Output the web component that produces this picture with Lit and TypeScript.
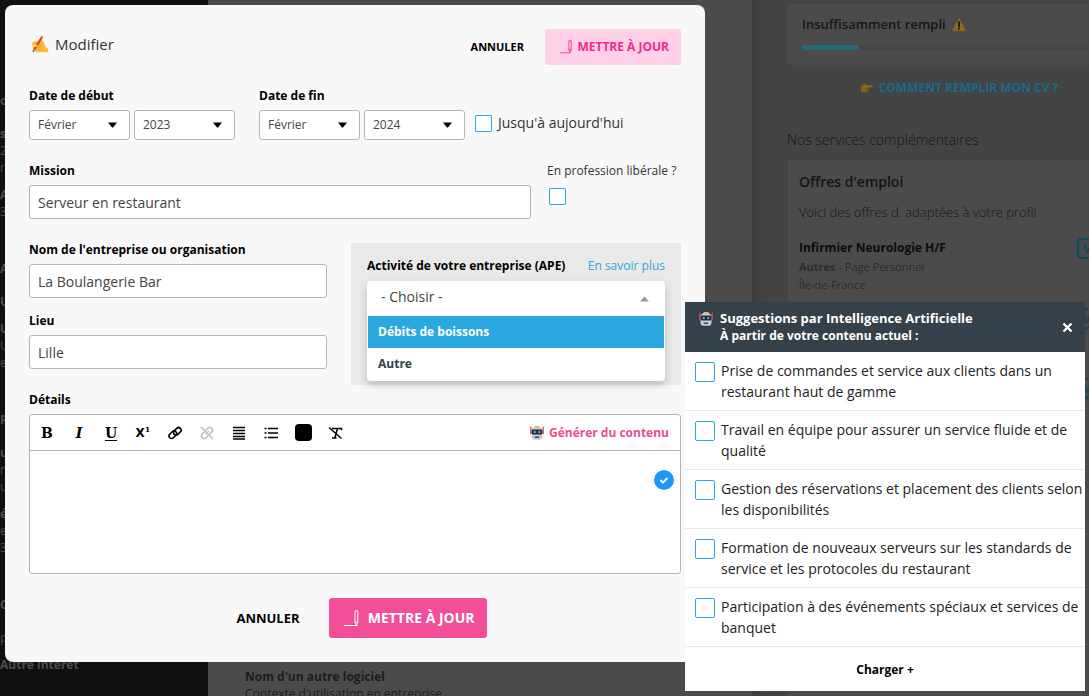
import { LitElement, html, css, svg, nothing } from "lit";
import { customElement, property, state } from "lit/decorators.js";

const writingHand = html`<svg class="emoji" width="18" height="18" viewBox="0 0 18 18" aria-hidden="true">
  <path d="M1 8.500C2 6.500 4 6 6 6.500L9.500 5.500C11 5 12.500 6 13 8L14.500 12L17.300 14V17.300H7C4.500 17.300 3 16 3.500 14.500L2 12Z" fill="#fdbb35"/>
  <path d="M7.500 10L11.500 8.800M7.200 12.500L11 11.800M7 15L11 14.500" stroke="#ee9b28" stroke-width="1"/>
  <path d="M3.200 14.600L10.800 2.400" stroke="#dd4530" stroke-width="2.300"/>
  <path d="M10.400 3L11.600 1.100" stroke="#f0705c" stroke-width="2.300"/>
  <path d="M1.800 17L3.400 14.400" stroke="#7a5238" stroke-width="1.300"/>
  <path d="M1.200 9.200L5.500 9.800C7 10 7 11.800 5.500 11.800L3 12Z" fill="#ffd15a"/>
</svg>`;

const robot = html`<svg class="emoji" width="14" height="14" viewBox="0 0 14 14" aria-hidden="true">
  <path d="M.8 .8v7.500M13.200 .8v7.500" stroke="#e2434f" stroke-width="1.300"/>
  <rect x="4.200" y="0" width="5.600" height="2.800" rx="1.200" fill="#f0b25a"/>
  <rect x="1.500" y="1.600" width="11" height="12.200" rx="3" fill="#c6cadd"/>
  <rect x="1.500" y="3.600" width="11" height="4.800" rx="1.400" fill="#222b3a"/>
  <circle cx="4.700" cy="6" r="1.300" fill="#4fa3d8"/>
  <circle cx="9.300" cy="6" r="1.300" fill="#4fa3d8"/>
  <rect x="4.600" y="10.600" width="4.800" height="1.500" rx=".7" fill="#3f4657"/>
</svg>`;

const warning = html`<svg class="emoji" width="14" height="13" viewBox="0 0 14 13" aria-hidden="true">
  <path d="M7 .8L13.300 12.300H.7Z" fill="#94671a" stroke="#94671a" stroke-linejoin="round"/>
  <path d="M7 4v4.600" stroke="#111" stroke-width="1.700" stroke-linecap="round"/><circle cx="7" cy="10.700" r=".9" fill="#111"/>
</svg>`;

const pointing = html`<svg class="emoji" width="13" height="12" viewBox="0 0 13 12" aria-hidden="true">
  <path d="M.6 5.500L4 1.500L6 3.300H11.600C12.800 3.300 12.800 5.200 11.600 5.200H8.200C9 6.600 8.900 8.300 8 9.300C7 10.800 4 11 1.200 9.800Z" fill="#886815"/>
  <path d="M5.600 6.700h2.600M5.600 8.400h2.200" stroke="#664b0c" stroke-width=".7"/>
</svg>`;

const pen = (w: number) => html`<svg width=${w} height=${w} viewBox="0 0 15 17" fill="none" stroke="currentColor" stroke-width="1" aria-hidden="true">
  <path d="M0 15.500h13.500M11 .8h2.800v11.400l-1.400 2.800L11 12.200zM11 12.200h2.800"/>
</svg>`;

const caret = (up = false) => html`<svg class="caret" width="9" height="6" viewBox="0 0 9 6" aria-hidden="true">
  <path d=${up ? "M0 5.500L4.500 .5L9 5.500Z" : "M0 .5h9L5 5.500H4Z"} fill="currentColor"/>
</svg>`;

const icon = (body: unknown) => html`<svg width="16" height="16" viewBox="0 0 16 16" fill="none" stroke="currentColor" stroke-width="1.500" aria-hidden="true">${body}</svg>`;

const link = svg`<g transform="rotate(-45 8 8)" stroke-width="1.700"><rect x="1" y="5.200" width="8.500" height="5" rx="2.500"/><rect x="6.500" y="6" width="8.500" height="5" rx="2.500"/></g>`;
const unlink = svg`<g stroke="#bcbcbc"><g transform="rotate(-45 8 8)"><path d="M7 5.300H4a2.700 2.700 0 0 0 0 5.400h3M9 5.300h3a2.700 2.700 0 0 1 0 5.400H9M6 8h1M9 8h1.500"/></g><path d="M2 2l12 12"/></g>`;
const justify = svg`<path d="M2 2.500h12M2 5.500h12M2 8.500h12M2 11.500h12M2 14h12" stroke-width="1.500"/>`;
const bullets = svg`<path d="M5 3.500h10M5 8h10M5 12.500h10M1.500 3.500h2M1.500 8h2M1.500 12.500h2" stroke-width="1.600"/>`;
const clear = svg`<path d="M5 3.500h9.500v1.700M10.500 3.500L7.800 13M5 13h4.500M2 2.500l12.500 11" stroke-width="1.500"/>`;

const base = css`
  :host, * { box-sizing: border-box; }
  button, input, select, textarea { font: inherit; color: inherit; margin: 0; }
  button { border: 0; background: none; padding: 0; cursor: pointer; }
  a { text-decoration: none; }
  svg { display: block; flex: none; }
  input[type="checkbox"] {
    appearance: none; flex: none; width: 17px; height: 17px;
    border: 1px solid #2fa8df; border-radius: 1px; background: #fff;
  }
`;

/* ------------------------------------------------------------ page behind */

const SIDE: [string, string][] = [
  ["o", "b"], ["s", "m b"], ["2", ""], ["r", ""], ["A", "s b"], ["3", ""],
  ["A", "l b"], ["U", "m b"], ["U", "s b"], ["U", ""], ["e", ""],
  ["R", "l b"], ["u", "m b"], ["n", ""], ["u", ""], ["é", "s b"], ["e", ""], ["3", ""],
  ["C", "l b"], ["p", "m"], ["Autre intérêt", "s b"],
];

@customElement("cv-page")
class CvPage extends LitElement {
  static styles = [base, css`
    :host { display: grid; grid-template-columns: 208px 1fr 337px; height: 100vh; overflow: hidden; font-size: 12px; line-height: 17px; background: #4b4b4b; }
    .side { background: #101010; color: #4c4c4c; padding-top: 92px; overflow: hidden; }
    .side p { margin: 0; white-space: nowrap; }
    .side .b { font-weight: 700; }
    .side .s { margin-top: 10px; }
    .side .m { margin-top: 16px; }
    .side .l { margin-top: 40px; }
    .main { display: flex; flex-direction: column; justify-content: flex-end; padding: 0 37px; overflow: hidden; color: #1c1c1c; }
    .main p { margin: 0; }
    .main p:last-child { margin-bottom: -6px; }
    .aside { background: #444; padding: 4px 0 0 35px; overflow: hidden; box-shadow: inset 14px 0 8px -8px #3e3e3e; white-space: nowrap; }
    .card { background: #4b4b4b; }
    .score { height: 61px; padding: 11px 0 0 15px; }
    .score h3 { display: flex; align-items: center; gap: 6px; margin: 0 0 11px; font-size: 13px; line-height: 19px; font-weight: 600; color: #161616; }
    .track { height: 5px; background: #464646; }
    .fill { height: 5px; background: #24697a; }
    .how { display: flex; justify-content: center; align-items: center; gap: 6px; padding: 13px 0 0 40px; margin-right: -2px; font-weight: 700; line-height: 20px; color: #1b6a88; }
    h2 { margin: 32px 0 10px; font-size: 14px; line-height: 20px; font-weight: 300; color: #141414; }
    .jobs { padding: 12px 0 0 11px; height: 100vh; border-left: 1px solid #414141; }
    .jobs h3 { margin: 0; font-size: 14px; line-height: 20px; font-weight: 600; color: #141414; }
    .jobs .intro { margin: 10px 0 16px; font-size: 13px; line-height: 20px; font-weight: 300; color: #161616; }
    .job { display: grid; grid-template-columns: 278px 60px; height: 70px; }
    .job h4 { margin: 0; font-size: 12px; line-height: 20px; color: #0c0c0c; }
    .job p { margin: 0; font-size: 11px; line-height: 18px; color: #2c2c2c; }
    .job button { align-self: start; height: 21px; border: 2px solid #10495c; border-radius: 4px; padding-left: 4px; text-align: left; font-weight: 700; line-height: 17px; color: #10495c; }
  `];

  @property({ type: Number }) score = 20;

  private job(body: unknown) {
    return html`<div class="job"><div>${body}</div><button>Voir</button></div>`;
  }

  render() {
    return html`
      <nav class="side">${SIDE.map(([t, c]) => html`<p class=${c}>${t}</p>`)}</nav>
      <main class="main"><p><b>Nom d'un autre logiciel</b></p><p>Contexte d'utilisation en entreprise</p></main>
      <aside class="aside">
        <section class="card score">
          <h3>Insuffisamment rempli ${warning}</h3>
          <div class="track"><div class="fill" style="width:${this.score}%"></div></div>
        </section>
        <a class="how" href="#aide">${pointing}COMMENT REMPLIR MON CV ?</a>
        <h2>Nos services complémentaires</h2>
        <section class="card jobs">
          <h3>Offres d'emploi</h3>
          <p class="intro">Voici des offres d. adaptées à votre profil</p>
          ${this.job(html`<h4>Infirmier Neurologie H/F</h4><p><b>Autres</b> - Page Personnel</p><p>Île-de-France</p>`)}
          ${this.job(nothing)}
          ${this.job(nothing)}
        </section>
      </aside>`;
  }
}

/* ------------------------------------------------------------- edit modal */

@customElement("edit-modal")
class EditModal extends LitElement {
  static styles = [base, css`
    :host { display: block; padding: 24px; background: #f8f8f8; border-radius: 8px; color: #333; font-size: 14px; line-height: 18px; }
    form { display: flex; flex-direction: column; }
    .head { display: flex; align-items: center; gap: 8px; }
    .head h1 { flex: 1; display: flex; align-items: center; gap: 6px; margin: 0; padding: 0 0 6px 2px; font-size: 15px; line-height: 20px; font-weight: 400; }
    .cancel { padding: 0 13px; font-size: 11px; line-height: 20px; font-weight: 700; color: #000; }
    .save { display: flex; align-items: center; justify-content: space-between; width: 136px; height: 36px; padding: 0 12px 0 14px; border-radius: 3px; background: #ffd1e6; color: #f5288c; font-size: 12px; font-weight: 700; white-space: nowrap; }
    .foot { display: flex; justify-content: center; align-items: center; gap: 16px; margin-top: 24px; }
    .foot .cancel { font-size: 13px; }
    .foot .save { width: 158px; height: 40px; background: #f34f98; color: #fff; font-size: 14px; }
    .row { display: flex; align-items: flex-start; gap: 24px; margin-top: 21px; }
    .row.tight { gap: 16px; }
    fieldset { border: 0; margin: 0; padding: 0; min-width: 0; }
    .label, legend { display: block; padding: 0; margin: 0 0 4px; font-size: 12px; line-height: 20px; font-weight: 700; color: #000; }
    .pair { display: flex; gap: 4px; }
    .select { position: relative; display: block; width: 101px; color: #000; }
    .select select { appearance: none; width: 100%; height: 30px; padding: 0 8px; border: 1px solid #b5b5b5; border-radius: 3px; background: #fff; font-size: 12px; color: #444; }
    .caret { position: absolute; right: 13px; top: 50%; margin-top: -3px; pointer-events: none; }
    .now { display: flex; align-items: center; gap: 6px; height: 24px; margin: 25px 0 0 -14px; }
    .text { width: 100%; height: 34px; padding: 0 8px; border: 1px solid #b5b5b5; border-radius: 3px; background: #fff; color: #444; }
    .grow { flex: 1; }
    .free { width: 134px; white-space: nowrap; font-size: 12px; line-height: 20px; }
    .free label { display: block; }
    .free input { display: block; margin: 7px 0 0 2px; }
    .company { flex: 1; min-width: 0; display: flex; flex-direction: column; gap: 13px; }
    .ape { flex: none; width: 330px; margin-top: 3px; padding: 13px 16px 4px; background: #e9e9e9; }
    .apehead { display: flex; justify-content: space-between; white-space: nowrap; }
    .apehead .label { margin-bottom: 5px; }
    .apehead a { font-size: 12px; line-height: 20px; color: #2aa5df; }
    .drop { border-radius: 4px; background: #fff; box-shadow: 0 4px 8px rgba(0, 0, 0, .2); overflow: hidden; }
    .drop .select { width: 100%; color: #999; }
    .drop select { height: 35px; border: 0; padding: 0 14px 3px; font-size: 14px; }
    .drop .caret { right: 16px; }
    .drop ul { list-style: none; margin: 0; padding: 0 1px 1px; }
    .drop li { height: 32px; padding: 0 10px; font-size: 12px; line-height: 32px; font-weight: 700; color: #333e48; }
    .drop li.on { background: #2ba8e0; color: #fff; }
    .details { margin-top: 5px; }
    .editor { position: relative; border: 1px solid #b5b5b5; border-radius: 3px; background: #fff; }
    .bar { display: flex; align-items: center; height: 36px; padding: 0 11px 0 1px; border-bottom: 1px solid #b5b5b5; color: #000; }
    .tool { display: flex; justify-content: center; align-items: center; width: 32px; height: 34px; font-family: "DejaVu Serif", serif; font-weight: 700; }
    .tool.i { font-style: italic; }
    .tool.u span { text-decoration: underline; text-underline-offset: 2px; }
    .tool.x span { font: 700 12px/18px "DejaVu Sans", sans-serif; }
    .tool sup { font-size: 8px; line-height: 9px; align-self: flex-start; margin-top: 9px; }
    .swatch { width: 17px; height: 17px; border-radius: 4px; background: #000; }
    .gen { display: flex; align-items: center; gap: 5px; margin-left: auto; font-size: 12px; font-weight: 700; color: #ea4c96; white-space: nowrap; }
    textarea { display: block; width: 100%; height: 122px; border: 0; resize: none; background: none; padding: 8px 40px 8px 8px; outline: 0; }
    .ok { position: absolute; right: 6px; top: 55px; }
  `];

  @state() private activity = "Débits de boissons";

  private select(name: string, value: string) {
    return html`<span class="select"><select aria-label=${name}><option>${value}</option></select>${caret()}</span>`;
  }

  render() {
    return html`<form @submit=${(e: Event) => e.preventDefault()}>
      <header class="head">
        <h1>${writingHand}Modifier</h1>
        <button type="button" class="cancel">ANNULER</button>
        <button class="save">${pen(14)}METTRE À JOUR</button>
      </header>

      <div class="row">
        <fieldset><legend>Date de début</legend><div class="pair">${this.select("Mois de début", "Février")}${this.select("Année de début", "2023")}</div></fieldset>
        <fieldset><legend>Date de fin</legend><div class="pair">${this.select("Mois de fin", "Février")}${this.select("Année de fin", "2024")}</div></fieldset>
        <label class="now"><input type="checkbox">Jusqu'à aujourd'hui</label>
      </div>

      <div class="row tight">
        <div class="grow"><label class="label" for="mission">Mission</label><input class="text" id="mission" value="Serveur en restaurant"></div>
        <div class="free"><label for="free">En profession libérale ?</label><input type="checkbox" id="free"></div>
      </div>

      <div class="row">
        <div class="company">
          <div><label class="label" for="org">Nom de l'entreprise ou organisation</label><input class="text" id="org" value="La Boulangerie Bar"></div>
          <div><label class="label" for="place">Lieu</label><input class="text" id="place" value="Lille"></div>
        </div>
        <div class="ape">
          <div class="apehead"><label class="label" for="ape">Activité de votre entreprise (APE)</label><a href="#ape">En savoir plus</a></div>
          <div class="drop">
            <span class="select"><select id="ape"><option>- Choisir -</option></select>${caret(true)}</span>
            <ul role="listbox" aria-label="Activité">
              ${["Débits de boissons", "Autre"].map(o => html`<li role="option" class=${o === this.activity ? "on" : ""} aria-selected=${o === this.activity} @mouseenter=${() => (this.activity = o)}>${o}</li>`)}
            </ul>
          </div>
        </div>
      </div>

      <div class="details">
        <label class="label" for="details">Détails</label>
        <div class="editor">
          <div class="bar">
            <button type="button" class="tool" aria-label="Gras">B</button>
            <button type="button" class="tool i" aria-label="Italique">I</button>
            <button type="button" class="tool u" aria-label="Souligné"><span>U</span></button>
            <button type="button" class="tool x" aria-label="Exposant"><span>X</span><sup>1</sup></button>
            <button type="button" class="tool" aria-label="Lien">${icon(link)}</button>
            <button type="button" class="tool" aria-label="Supprimer le lien">${icon(unlink)}</button>
            <button type="button" class="tool" aria-label="Justifier">${icon(justify)}</button>
            <button type="button" class="tool" aria-label="Liste">${icon(bullets)}</button>
            <button type="button" class="tool" aria-label="Couleur"><span class="swatch"></span></button>
            <button type="button" class="tool" aria-label="Effacer la mise en forme">${icon(clear)}</button>
            <button type="button" class="gen">${robot}Générer du contenu</button>
          </div>
          <textarea id="details"></textarea>
          <svg class="ok" width="20" height="20" viewBox="0 0 20 20" aria-hidden="true"><circle cx="10" cy="10" r="10" fill="#2196f9"/><path d="M6.500 10.200l2.400 2.400 4.600-4.800" fill="none" stroke="#fff" stroke-width="1.800"/></svg>
        </div>
      </div>

      <footer class="foot">
        <button type="button" class="cancel">ANNULER</button>
        <button class="save">${pen(17)}METTRE À JOUR</button>
      </footer>
    </form>`;
  }
}

/* ------------------------------------------------------- suggestion panel */

@customElement("ai-panel")
class AiPanel extends LitElement {
  static styles = [base, css`
    :host { display: block; background: #fff; color: #222; font-size: 14px; line-height: 21px; }
    header { display: flex; align-items: center; padding: 8px 12px 8px 14px; background: #35414a; color: #fff; font-weight: 700; }
    header svg.emoji { align-self: flex-start; margin: 2px 7px 0 0; }
    h2 { flex: 1; margin: 0; font-size: 13px; line-height: 17px; white-space: nowrap; }
    h2 small { display: block; font-size: 12px; }
    ul { list-style: none; margin: 0; padding: 0; }
    label { display: flex; gap: 6px; padding: 8px 0 8px 10px; border-bottom: 1px solid #e8e8e8; }
    input[type="checkbox"] { width: 20px; height: 20px; margin-top: 2px; border-radius: 2px; }
    .more { display: block; width: 100%; height: 44px; font-size: 12px; font-weight: 700; color: #000; }
  `];

  @property({ attribute: false }) items = [
    "Prise de commandes et service aux clients dans un restaurant haut de gamme",
    "Travail en équipe pour assurer un service fluide et de qualité",
    "Gestion des réservations et placement des clients selon les disponibilités",
    "Formation de nouveaux serveurs sur les standards de service et les protocoles du restaurant",
    "Participation à des événements spéciaux et services de banquet",
  ];

  render() {
    return html`
      <header>${robot}<h2>Suggestions par Intelligence Artificielle<small>À partir de votre contenu actuel :</small></h2>
        <button aria-label="Fermer"><svg width="11" height="11" viewBox="0 0 11 11" stroke="#fff" stroke-width="2.400"><path d="M1.500 1.500l8 8M9.500 1.500l-8 8"/></svg></button>
      </header>
      <ul>${this.items.map(t => html`<li><label><input type="checkbox"><span>${t}</span></label></li>`)}</ul>
      <button class="more">Charger +</button>`;
  }
}

@customElement("app-root")
class AppRoot extends LitElement {
  static styles = css`
    :host { display: block; position: relative; height: 100vh; overflow: hidden; font-family: "Open Sans", sans-serif; }
    .modal { position: absolute; left: 5px; top: 5px; width: 700px; }
    .panel { position: absolute; right: 4px; bottom: 5px; width: 400px; }
  `;

  render() {
    return html`<cv-page></cv-page><edit-modal class="modal"></edit-modal><ai-panel class="panel"></ai-panel>`;
  }
}
